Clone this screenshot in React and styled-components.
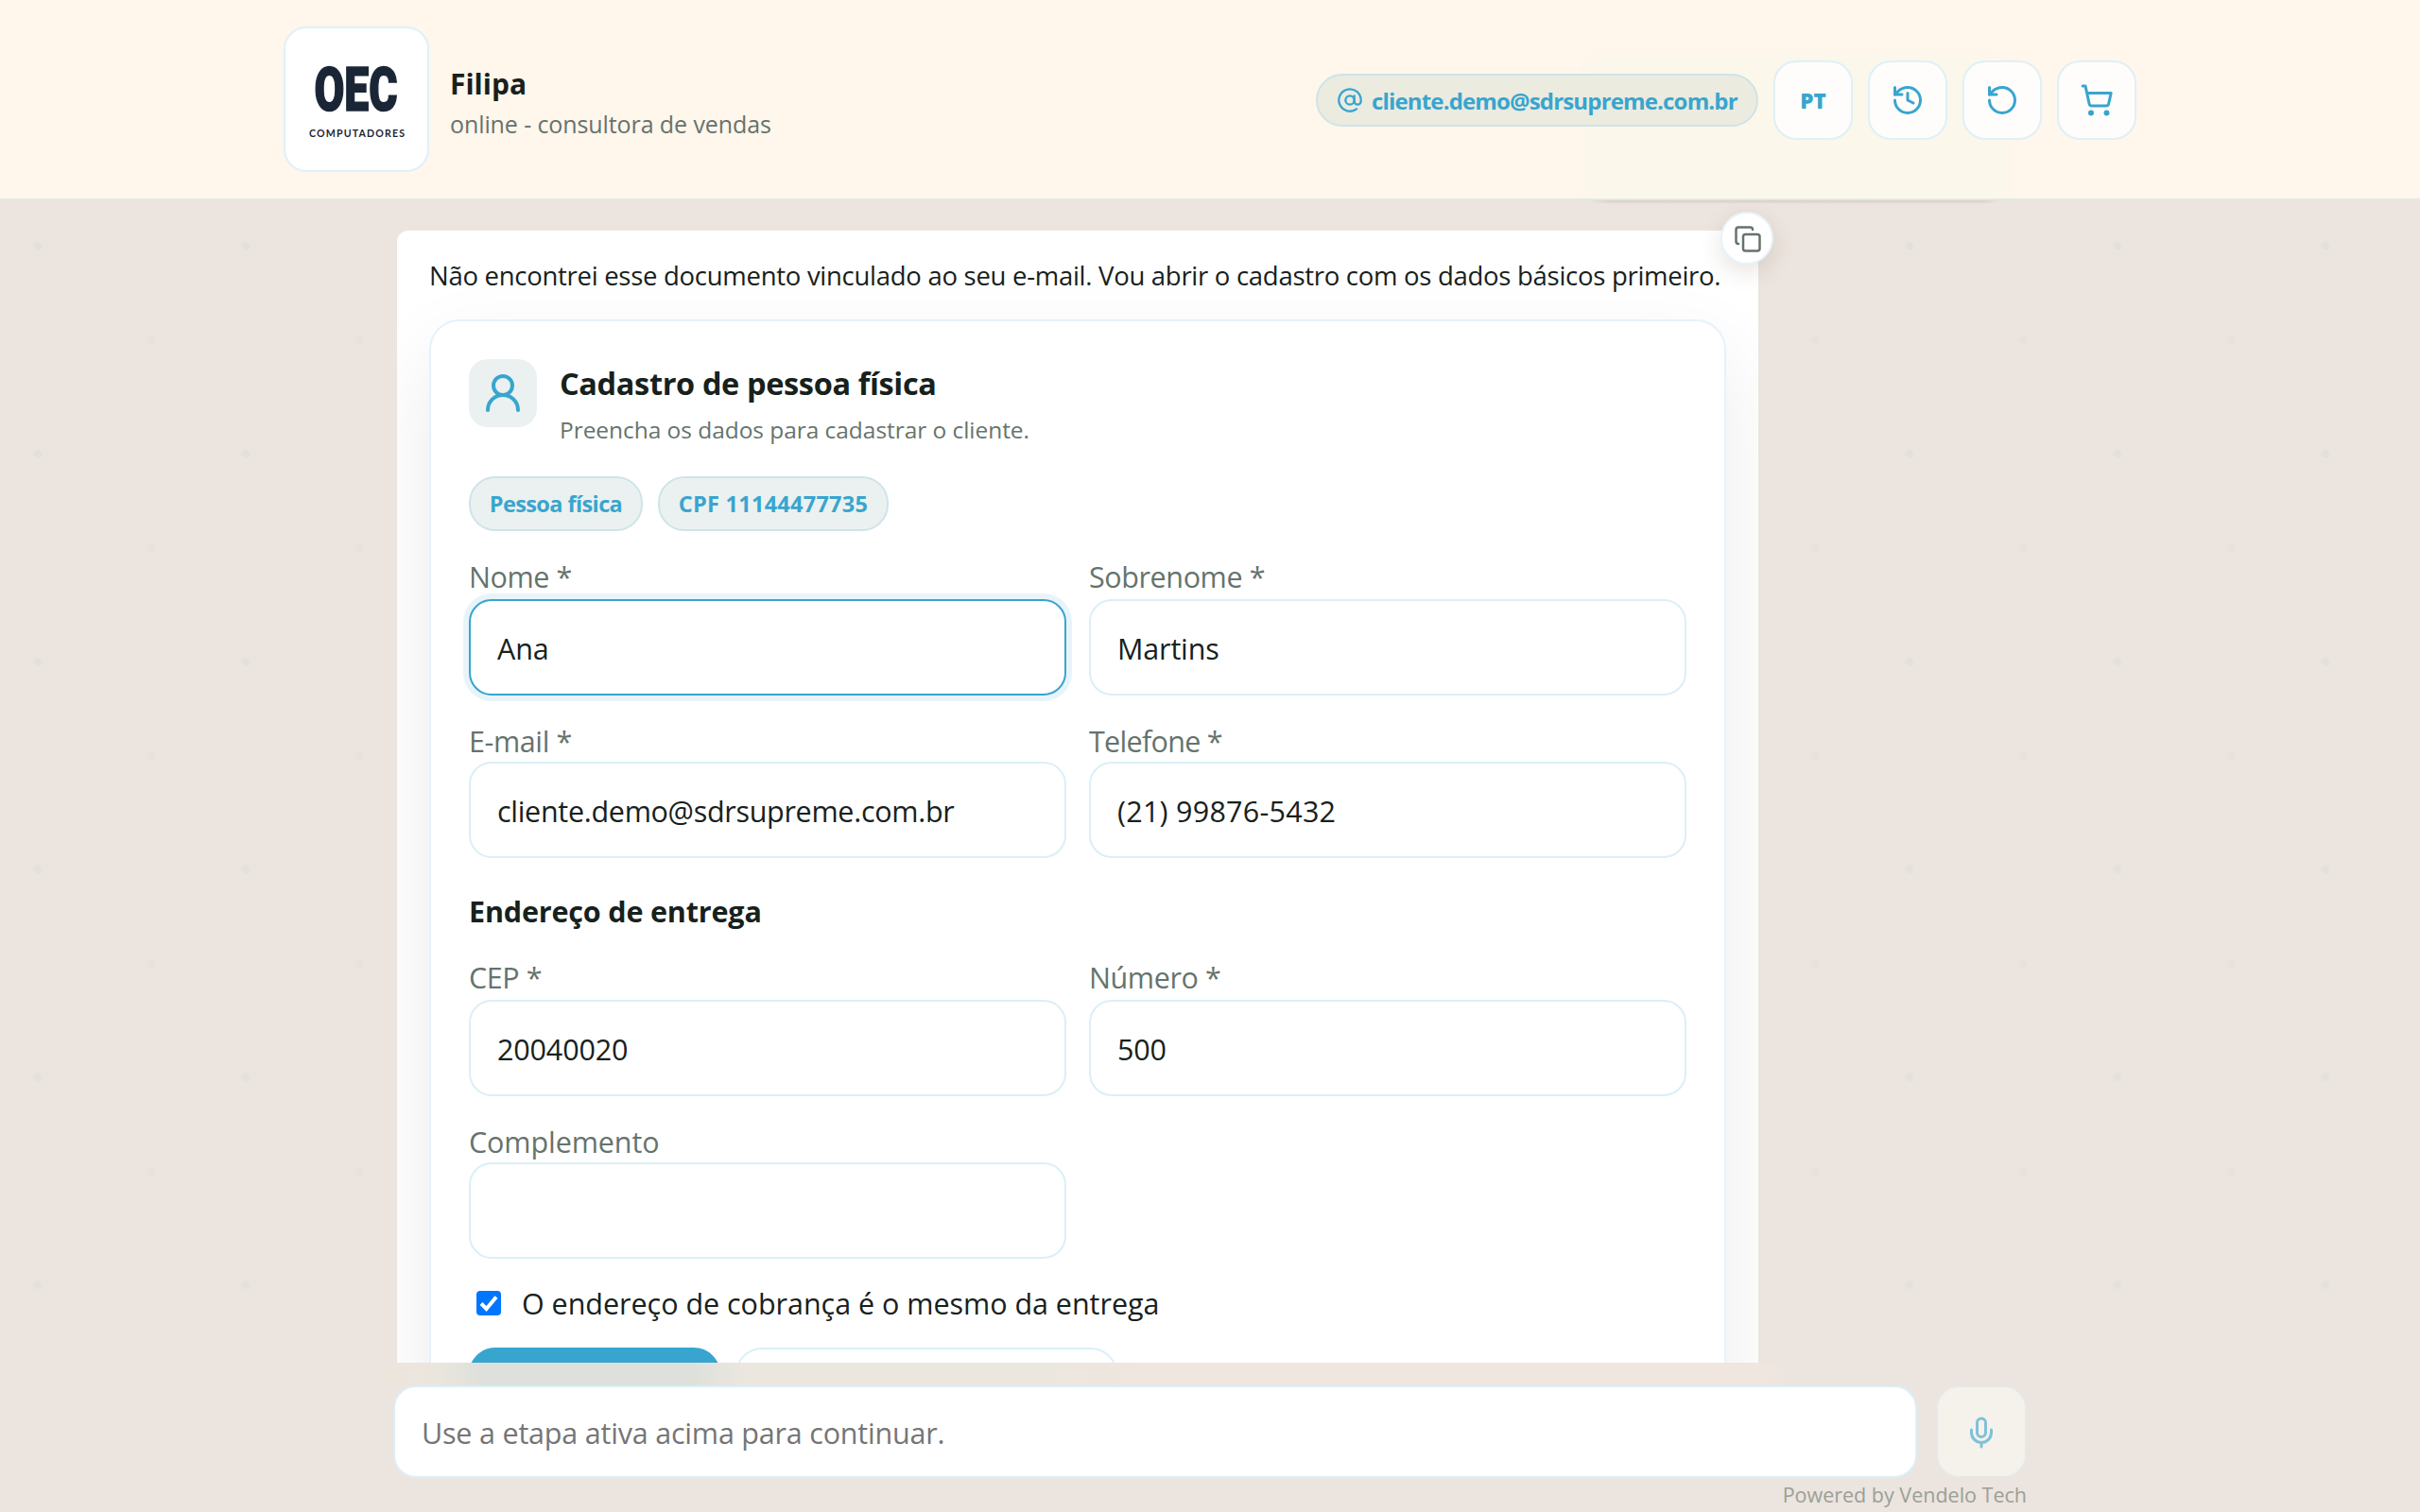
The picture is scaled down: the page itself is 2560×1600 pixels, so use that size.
import React from 'react';
import styled, { createGlobalStyle, css } from 'styled-components';
import { AtSign, Copy, History, Mic, RotateCcw, ShoppingCart, UserRound } from 'lucide-react';

const GlobalStyle = createGlobalStyle`
  * {
    box-sizing: border-box;
  }

  body {
    margin: 0;
    overflow: hidden;
    font-family: 'Segoe UI', 'Open Sans', 'Noto Sans', sans-serif;
    color: #17211c;
  }

  input, button {
    font-family: inherit;
  }

  svg {
    flex-shrink: 0;
  }
`

const Page = styled.div`
  display: flex;
  flex-direction: column;
  height: 1600px;
  background-color: #ece4de;
  background-image:
    radial-gradient(circle at 40px 40px, rgba(40, 190, 180, .06) 0 4px, transparent 4px),
    radial-gradient(circle at 160px 140px, rgba(40, 190, 160, .035) 0 4px, transparent 4px);
  background-size: 220px 220px;
`

const Header = styled.header`
  position: relative;
  flex: none;
  height: 212px;
  padding: 0 300px;
  background: #fff6ec;
  border-bottom: 2px solid #e3e9e6;
`

const HeaderInner = styled.div`
  position: relative;
  display: flex;
  align-items: center;
  height: 210px;
`

/* tail of the previous message, seen through the header */
const Ghost = styled.div`
  position: absolute;
  left: 1660px;
  top: 40px;
  width: 480px;
  height: 170px;
  overflow: hidden;

  &::before {
    content: '';
    position: absolute;
    left: 18px;
    top: 18px;
    width: 444px;
    height: 190px;
    border-radius: 24px;
    background: #fbf7eb;
    filter: blur(4px);
  }
`

const GhostEdge = styled.div`
  position: absolute;
  left: 1682px;
  top: 212px;
  width: 434px;
  height: 4px;
  background: linear-gradient(rgba(110, 95, 80, .17), rgba(110, 95, 80, 0));
  mask-image: linear-gradient(90deg, transparent, #000 20px, #000 414px, transparent);
`

const Logo = styled.div`
  width: 154px;
  height: 154px;
  margin-right: 22px;
  background: #fff;
  border: 2px solid #dff1f9;
  border-radius: 24px;
`

const Agent = styled.div`
  flex: 1;
  padding-top: 11px;
`

const Line = styled.div`
  width: max-content;
  white-space: nowrap;
  font-size: ${props => props.$size}px;
  line-height: ${props => props.$height}px;
  font-weight: ${props => props.$weight || 400};
  letter-spacing: ${props => props.$spacing || 0}px;
  color: ${props => props.$muted ? '#66736c' : '#17211c'};
`

const SectionTitle = styled(Line)`
  padding-top: 16px;
`

const Actions = styled.div`
  display: flex;
  align-items: center;
  gap: 16px;
  padding-top: 2px;
`

const pill = css`
  display: flex;
  align-items: center;
  border: 2px solid #cee4e8;
  border-radius: 28px;
  color: #38a5cf;
  font-weight: 700;
  white-space: nowrap;
`

const Account = styled.div`
  ${pill}
  gap: 9px;
  width: 468px;
  height: 56px;
  padding-left: 20px;
  background: #ebebe0;
  font-size: 24px;
  letter-spacing: -.84px;

  span {
    padding-top: 1px;
  }
`

const IconButton = styled.button`
  display: flex;
  align-items: center;
  justify-content: center;
  width: 84px;
  height: 84px;
  padding: 0;
  background: #fffdfc;
  border: 2px solid #dff0f6;
  border-radius: 24px;
  color: #38a5cf;
  font-size: 22.5px;
  font-weight: 800;
`

const Chat = styled.main`
  flex: 1;
  min-height: 0;
  overflow: hidden;
  padding: 32px 0 0 420px;
`

const Message = styled.section`
  position: relative;
  width: 1440px;
  height: 1400px;
  padding: 30px 34px;
  background: #fff;
  border-radius: 12px;
`

const CopyButton = styled.button`
  position: absolute;
  top: -20px;
  right: -16px;
  display: flex;
  align-items: center;
  justify-content: center;
  width: 56px;
  height: 56px;
  padding: 2px 0 0 2px;
  background: #fff;
  border: 2px solid #e6f3fa;
  border-radius: 50%;
  color: #66736c;
  box-shadow: 0 8px 24px rgba(60, 50, 20, .13);
`

const Card = styled.div`
  height: 1300px;
  margin-top: 28px;
  padding: 40px;
  background: #fff;
  border: 2px solid #e5f3fa;
  border-radius: 32px;
  box-shadow: 0 36px 90px rgba(0, 0, 0, .08);
  clip-path: inset(-80px -34px -80px -34px);
`

const CardHead = styled.div`
  display: flex;
  gap: 24px;
  height: 72px;
`

const Badge = styled.div`
  display: flex;
  align-items: center;
  justify-content: center;
  width: 72px;
  height: 72px;
  background: #ebf1f1;
  border-radius: 20px;
  color: #38a5cf;
`

const Tags = styled.div`
  display: flex;
  gap: 16px;
  margin-top: 52px;
`

const Tag = styled.span`
  ${pill}
  justify-content: center;
  width: ${props => props.$width}px;
  height: 58px;
  background: #ebf1f1;
  font-size: 23.5px;
  letter-spacing: ${props => props.$spacing}px;
`

const Fields = styled.div`
  display: grid;
  grid-template-columns: 632px 632px;
  column-gap: 24px;
  padding-top: ${props => props.$top}px;
`

const Field = styled.label`
  display: flex;
  flex-direction: column;
  gap: ${props => props.$gap}px;
`

const inputBox = css`
  display: block;
  background: #fff;
  border: 2px solid #dbeff7;
  border-radius: 24px;
  outline: none;
  color: #17211c;
  font-size: 30.5px;
`

const Input = styled.input`
  ${inputBox}
  width: 632px;
  height: 102px;
  padding: 2px 28px 0;
  letter-spacing: ${props => props.$spacing}px;

  ${props => props.$active && css`
    border-color: #38a5cf;
    box-shadow: 0 0 0 6px #e9f4fa;
  `}
`

const CheckRow = styled.label`
  display: flex;
  align-items: center;
  height: 54px;
  margin-top: 20px;
`

const Checkbox = styled.span`
  display: flex;
  align-items: center;
  justify-content: center;
  width: 26px;
  height: 26px;
  margin: 0 22px 0 8px;
  background: #0075ff;
  border-radius: 4px;
`

const Buttons = styled.div`
  display: flex;
  gap: 16px;
  margin-top: 20px;
`

const Button = styled.button`
  width: ${props => props.$width}px;
  height: 84px;
  background: ${props => props.$primary ? '#38a5cf' : '#fff'};
  border: 2px solid ${props => props.$primary ? '#38a5cf' : '#dbeff7'};
  border-radius: 28px;
`

const Footer = styled.footer`
  position: relative;
  flex: none;
  height: 158px;
  padding: 24px 416px 0;
  background: #ece4de;
`

/* blurred remains of the primary button under the bar */
const Glow = styled.div`
  position: absolute;
  left: 400px;
  top: 0;
  width: 1488px;
  height: 26px;
  background: linear-gradient(90deg, #ede5dd, #ebe6dd 60px, #dee0db 110px, #dee0db 330px, #ebe7df 390px, #ebe7df 700px, #eee6df 800px, #eee6df 1470px, #ece4de);
`

const Composer = styled.div`
  position: relative;
  display: flex;
  gap: 20px;
`

const Prompt = styled.input`
  ${inputBox}
  width: 1612px;
  height: 98px;
  padding: 2px 28px 0;
  letter-spacing: -.2px;

  &::placeholder {
    color: #757575;
    opacity: 1;
  }
`

const MicButton = styled(IconButton)`
  width: 96px;
  height: 98px;
  padding-top: 2px;
  background: #f5f1eb;
  border-color: #e4e9e8;
  color: #80c1d9;
`

const Powered = styled.div`
  margin-top: 3px;
  color: #9aa097;
  font-size: 21.5px;
  line-height: 30px;
  text-align: right;
`

const BrandName = styled.text`
  font-family: Roboto, sans-serif;
  font-size: 64px;
  font-weight: 900;
  stroke: #1a2636;
  stroke-width: 1.6px;
`

const BrandLine = styled.text`
  font-family: Lato, sans-serif;
  font-size: 10.6px;
  font-weight: 700;
`

const LogoMark = () => (
  <svg width="150" height="150" viewBox="0 0 150 150" fill="#1a2636" overflow="visible">
    <BrandName x="30.5" y="87.2" textLength="88" lengthAdjust="spacingAndGlyphs">OEC</BrandName>
    <BrandLine x="25" y="115.3" textLength="101">COMPUTADORES</BrandLine>
  </svg>
)

const rows = [
  [
    { label: 'Nome *', value: 'Ana', active: true },
    { label: 'Sobrenome *', value: 'Martins' },
  ],
  [
    { label: 'E-mail *', value: 'cliente.demo@sdrsupreme.com.br', spacing: -.3 },
    { label: 'Telefone *', value: '(21) 99876-5432', labelSpacing: -.7, spacing: .25 },
  ],
  [
    { label: 'CEP *', value: '20040020' },
    { label: 'Número *', value: '500' },
  ],
  [
    { label: 'Complemento', value: '', labelSpacing: -.1 },
  ],
]

const FieldRow = ({ fields, top, gap }) => (
  <Fields $top={top}>
    {fields.map(field => (
      <Field key={field.label} $gap={gap}>
        <Line $size={30.5} $height={36} $spacing={field.labelSpacing || -.4} $muted>{field.label}</Line>
        <Input defaultValue={field.value} $active={field.active} $spacing={field.spacing || -.15} />
      </Field>
    ))}
  </Fields>
)

export default function App() {
  return (
    <Page>
      <GlobalStyle />
      <Header>
        <Ghost />
        <GhostEdge />
        <HeaderInner>
          <Logo><LogoMark /></Logo>
          <Agent>
            <Line $size={30} $height={40} $weight={700}>Filipa</Line>
            <Line $size={25} $height={44} $spacing={-.1} $muted>online - consultora de vendas</Line>
          </Agent>
          <Actions>
            <Account>
              <AtSign size={28} strokeWidth={2} />
              <span>cliente.demo@sdrsupreme.com.br</span>
            </Account>
            <IconButton>PT</IconButton>
            <IconButton><History size={36} /></IconButton>
            <IconButton><RotateCcw size={36} /></IconButton>
            <IconButton><ShoppingCart size={36} /></IconButton>
          </Actions>
        </HeaderInner>
      </Header>

      <Chat>
        <Message>
          <CopyButton><Copy size={30} /></CopyButton>
          <Line $size={27.5} $height={36} $spacing={-.28}>
            Não encontrei esse documento vinculado ao seu e-mail. Vou abrir o cadastro com os dados básicos primeiro.
          </Line>
          <Card>
            <CardHead>
              <Badge><UserRound size={48} /></Badge>
              <div>
                <Line $size={32.5} $height={52} $spacing={-.36} $weight={700}>Cadastro de pessoa física</Line>
                <Line $size={24.5} $height={46} $spacing={-.05} $muted>Preencha os dados para cadastrar o cliente.</Line>
              </div>
            </CardHead>
            <Tags>
              <Tag $width={184} $spacing={-.6}>Pessoa física</Tag>
              <Tag $width={244} $spacing={.25}>CPF 11144477735</Tag>
            </Tags>
            <FieldRow fields={rows[0]} top={30} gap={6} />
            <FieldRow fields={rows[1]} top={30} gap={4} />
            <SectionTitle $size={30.5} $height={80} $spacing={-.17} $weight={700}>Endereço de entrega</SectionTitle>
            <FieldRow fields={rows[2]} top={12} gap={6} />
            <FieldRow fields={rows[3]} top={30} gap={4} />
            <CheckRow>
              <Checkbox>
                <svg width="26" height="26" viewBox="0 0 26 26" fill="none" stroke="#fff" strokeWidth="4">
                  <path d="M5 13.500L10.500 19L21 6.500" />
                </svg>
              </Checkbox>
              <Line $size={30.5} $height={56} $spacing={-.03}>O endereço de cobrança é o mesmo da entrega</Line>
            </CheckRow>
            <Buttons>
              <Button $primary $width={266} />
              <Button $width={404} />
            </Buttons>
          </Card>
        </Message>
      </Chat>

      <Footer>
        <Glow />
        <Composer>
          <Prompt placeholder="Use a etapa ativa acima para continuar." />
          <MicButton><Mic size={36} /></MicButton>
        </Composer>
        <Powered>Powered by Vendelo Tech</Powered>
      </Footer>
    </Page>
  )
}
